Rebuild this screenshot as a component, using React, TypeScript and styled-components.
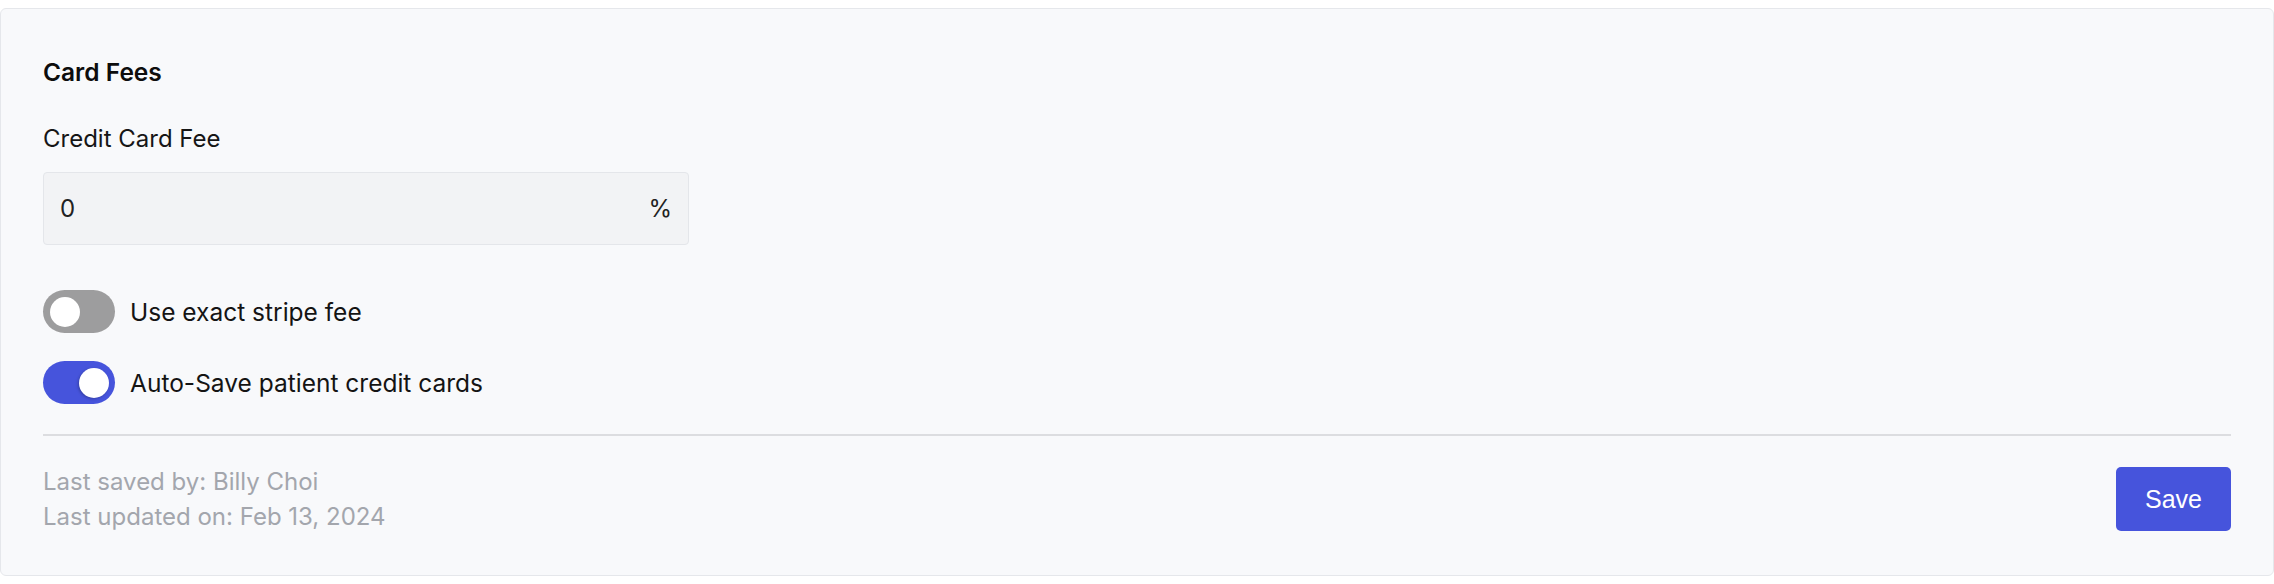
import { useState } from "react"
import styled, { createGlobalStyle } from "styled-components"

const GlobalStyle = createGlobalStyle`
    body {
        margin: 0;
        background: #ffffff;
        font-family: Inter, "Noto Sans", sans-serif;
        color: #141414;
    }
`

export default function App() {
    const [exactFee, setExactFee] = useState(false)
    const [autoSave, setAutoSave] = useState(true)

    return <Page>
        <GlobalStyle/>
        <Card>
            <Title>Card Fees</Title>
            <Label>Credit Card Fee</Label>
            <InputBox>
                <Value>0</Value>
                <Suffix>%</Suffix>
            </InputBox>
            <Toggles>
                <ToggleRow onClick={() => setExactFee(!exactFee)}>
                    <Switch $on={exactFee}><Knob $on={exactFee}/></Switch>
                    <ToggleText>Use exact stripe fee</ToggleText>
                </ToggleRow>
                <ToggleRow onClick={() => setAutoSave(!autoSave)}>
                    <Switch $on={autoSave}><Knob $on={autoSave}/></Switch>
                    <ToggleText>Auto-Save patient credit cards</ToggleText>
                </ToggleRow>
            </Toggles>
            <Divider/>
            <Footer>
                <Meta>
                    <span>Last saved by: Billy Choi</span>
                    <span>Last updated on: Feb 13, 2024</span>
                </Meta>
                <SaveButton>Save</SaveButton>
            </Footer>
        </Card>
    </Page>
}

const Page = styled.div`
    padding-top: 8px;
`

const Card = styled.div`
    background: #f8f9fb;
    border: 1px solid #e5e7eb;
    border-radius: 6px;
    padding: 47px 42px 41px;
    display: flex;
    flex-direction: column;
`

const Title = styled.h3`
    margin: 0;
    font-size: 24.5px;
    font-weight: 600;
    line-height: 32px;
    color: #0d0d0d;
`

const Label = styled.label`
    margin-top: 35px;
    font-size: 24px;
    font-weight: 400;
    line-height: 32px;
    color: #161616;
`

const InputBox = styled.div`
    margin-top: 17px;
    width: 646px;
    height: 73px;
    box-sizing: border-box;
    display: flex;
    align-items: center;
    justify-content: space-between;
    padding: 0 16px;
    background: #f2f3f5;
    border: 1px solid #e4e6ea;
    border-radius: 4px;
    font-size: 24px;
    color: #222222;
`

const Value = styled.span``

const Suffix = styled.span``

const Toggles = styled.div`
    margin-top: 45px;
    display: flex;
    flex-direction: column;
    gap: 28px;
`

const ToggleRow = styled.div`
    display: flex;
    align-items: center;
    gap: 15px;
    cursor: pointer;
`

const Switch = styled.div<{ $on: boolean }>`
    width: 72px;
    height: 43px;
    border-radius: 22px;
    background: ${p => p.$on ? '#4654dc' : '#9d9d9e'};
    display: flex;
    align-items: center;
    justify-content: ${p => p.$on ? 'flex-end' : 'flex-start'};
    padding: 0 6px 0 7px;
    box-sizing: border-box;
`

const Knob = styled.div<{ $on: boolean }>`
    width: 30px;
    height: 30px;
    border-radius: 50%;
    background: #ffffff;
    box-shadow: ${p => p.$on ? '-1px 1px 3px rgba(0, 0, 0, 0.25)' : 'none'};
`

const ToggleText = styled.span`
    font-size: 24.5px;
    line-height: 32px;
    color: #141414;
`

const Divider = styled.hr`
    margin: 30px 0 0;
    border: none;
    height: 2px;
    background: #dcdde0;
`

const Footer = styled.div`
    margin-top: 28px;
    display: flex;
    align-items: center;
    justify-content: space-between;
`

const Meta = styled.div`
    display: flex;
    flex-direction: column;
    font-size: 24px;
    line-height: 35px;
    color: #a3a6ad;
`

const SaveButton = styled.button`
    all: unset;
    width: 115px;
    height: 64px;
    box-sizing: border-box;
    display: flex;
    align-items: center;
    justify-content: center;
    background: #4654dc;
    color: #ffffff;
    border-radius: 5px;
    font-family: "Liberation Sans", Arial, sans-serif;
    font-size: 25px;
    cursor: pointer;
`
